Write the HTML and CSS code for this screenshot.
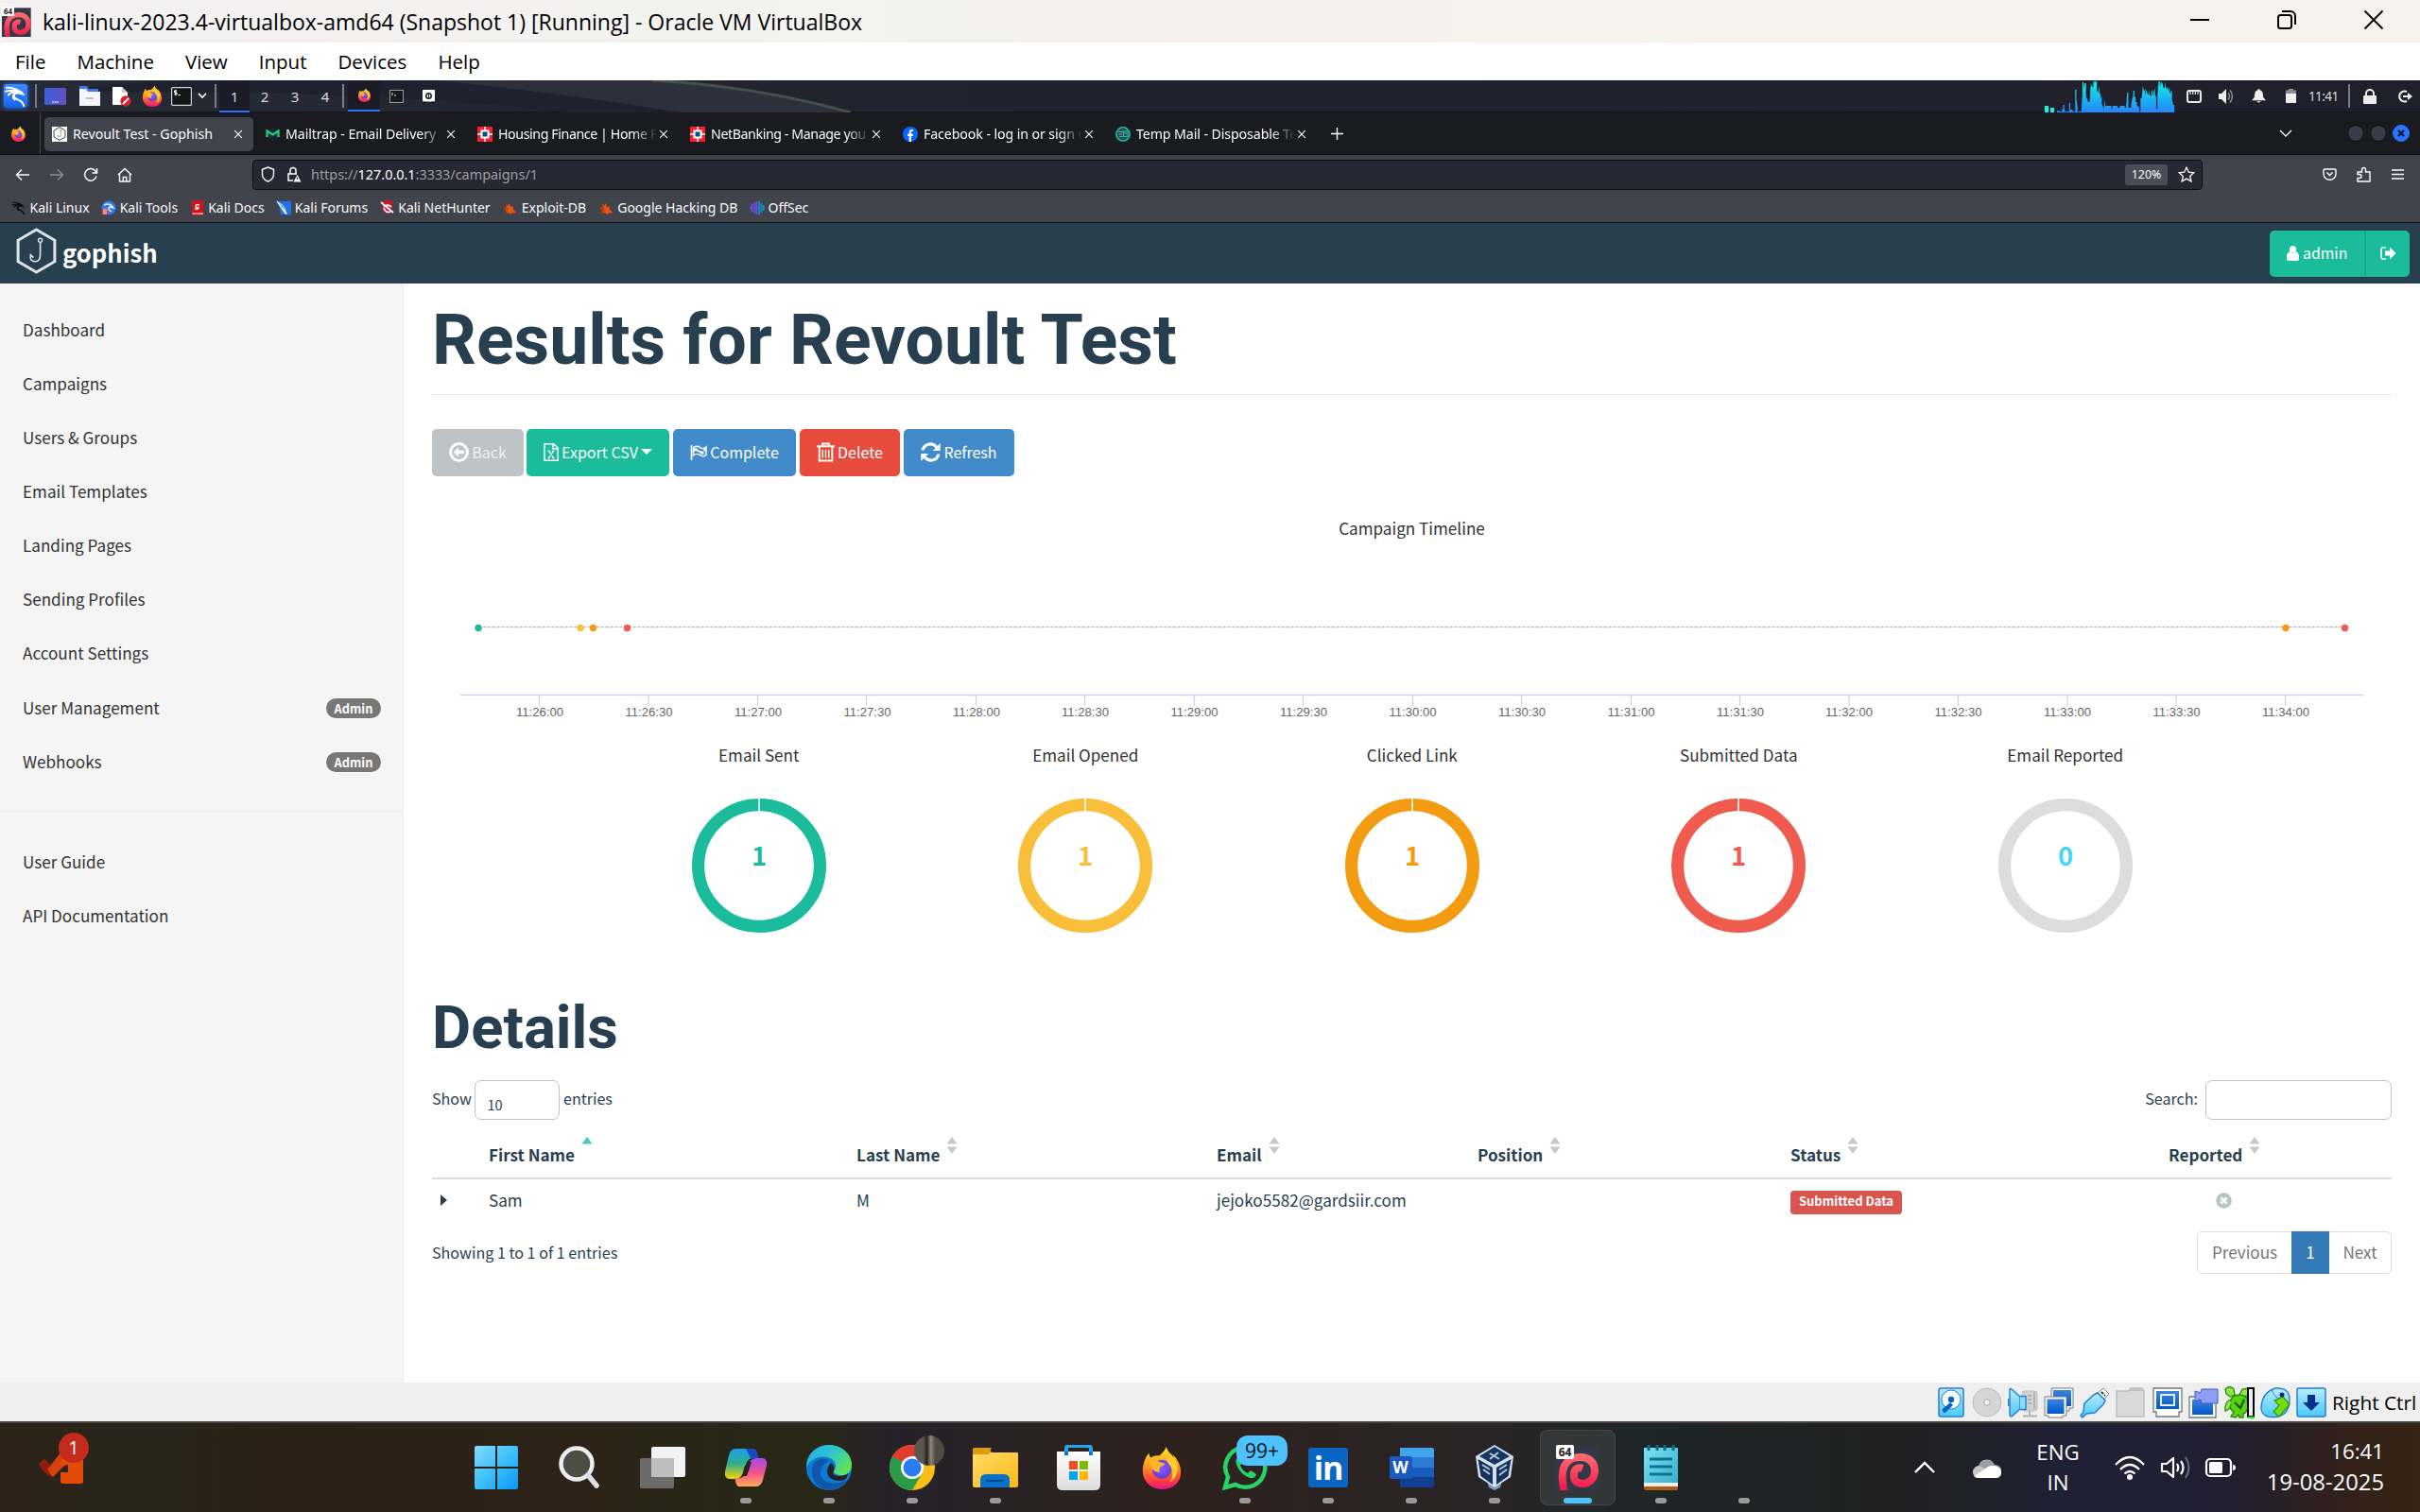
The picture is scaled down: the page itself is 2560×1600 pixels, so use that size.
FILE: index.html
```html
<!DOCTYPE html>
<html lang="en">
<head>
<meta charset="utf-8">
<title>Revoult Test - Gophish</title>
<link rel="stylesheet" href="styles.css">
</head>
<body>
<svg class="defs" width="0" height="0">
  <defs>
    <linearGradient id="fx" x1="0" y1="0" x2="0" y2="1"><stop offset="0" stop-color="#ffe226"/><stop offset=".45" stop-color="#ff9a1f"/><stop offset=".8" stop-color="#ff3b40"/><stop offset="1" stop-color="#e31587"/></linearGradient>
    <radialGradient id="fxg" cx=".5" cy=".4" r=".6"><stop offset="0" stop-color="#9059ff"/><stop offset="1" stop-color="#5b3fd6"/></radialGradient>
    <linearGradient id="cpu" x1="0" y1="0" x2="0" y2="1"><stop offset="0" stop-color="#0ff5e4"/><stop offset="1" stop-color="#2777ff"/></linearGradient>
    <linearGradient id="pk" x1="0" y1="0" x2="0" y2="1"><stop offset="0" stop-color="#ff6a6f"/><stop offset="1" stop-color="#f3154a"/></linearGradient>
    <linearGradient id="win" x1="0" y1="0" x2="1" y2="1"><stop offset="0" stop-color="#84dcff"/><stop offset=".5" stop-color="#3fc0fb"/><stop offset="1" stop-color="#0a95f5"/></linearGradient>
    <linearGradient id="cp1" x1="0" y1="0" x2="0" y2="1"><stop offset="0" stop-color="#1b9ef0"/><stop offset=".5" stop-color="#2fae8c"/><stop offset="1" stop-color="#f5d400"/></linearGradient>
    <linearGradient id="cp2" x1="0" y1="0" x2="0" y2="1"><stop offset="0" stop-color="#a04bf0"/><stop offset=".5" stop-color="#f0508c"/><stop offset="1" stop-color="#ffae55"/></linearGradient>
    <linearGradient id="ed1" x1="0" y1="0" x2="1" y2=".6"><stop offset="0" stop-color="#2aa8e8"/><stop offset=".5" stop-color="#2bc3d2"/><stop offset="1" stop-color="#5fe35a"/></linearGradient>
    <linearGradient id="fold" x1="0" y1="0" x2="1" y2="1"><stop offset="0" stop-color="#ffdc6b"/><stop offset="1" stop-color="#fdb813"/></linearGradient>
    <linearGradient id="store" x1="0" y1="0" x2="0" y2="1"><stop offset="0" stop-color="#fff"/><stop offset="1" stop-color="#dcdcdc"/></linearGradient>
    <linearGradient id="note" x1="0" y1="0" x2="1" y2="1"><stop offset="0" stop-color="#7fe3f2"/><stop offset="1" stop-color="#33abc9"/></linearGradient>
    <linearGradient id="aq" x1="0" y1="0" x2="0" y2="1"><stop offset="0" stop-color="#b8ecff"/><stop offset="1" stop-color="#4cc9f8"/></linearGradient>
    <linearGradient id="bl" x1="0" y1="0" x2="0" y2="1"><stop offset="0" stop-color="#3b84dd"/><stop offset="1" stop-color="#0059cc"/></linearGradient>
    <symbol id="firefox" viewBox="0 0 44 48"><path fill="url(#fx)" d="M4 14c1-3 3-5 4-6 0 2 1 4 2 5 3-2 6-3 9-2 4-3 7-7 8-10 1 4 3 6 6 9l2 3c0-2-.500-3-1-4 5 5 9 12 9 20 0 12-9 19-21 19S1 39 1 28c0-5 1-10 3-14z"/><circle cx="22" cy="26" r="10.500" fill="url(#fxg)"/><path fill="#ffb52a" d="M8 17c4-2 9-1 12 1 2 1 5 1 5 2 0 2-4 2-5 4s-1 3 0 5c-4 0-7-1-9-4z"/><path fill="#ffcf30" d="M31 9c6 5 9 12 8 19-1 6-4 10-8 12 3-5 4-10 2-15-2-4-5-6-5-9 0-3 1-5 3-7z"/></symbol>
    <symbol id="hdfc" viewBox="0 0 16 16"><path fill="#ed232a" d="M0 0h16v16H0z"/><path fill="#fff" d="M7.300 0h1.400v16H7.300zM0 7.300h16v1.400H0z"/><path fill="#fff" d="M3.500 3.500h9v9h-9z"/><path fill="#004c8f" d="M5.500 5.500h5v5h-5z"/></symbol>
    <symbol id="hook" viewBox="0 0 42 48"><path fill="none" stroke="currentColor" stroke-width="3" d="M21 2 40 13v22L21 46 2 35V13z"/><path fill="none" stroke="currentColor" stroke-width="1.600" d="M25 15v13c0 5-2 7-5 7-4 0-6-2-5-7l3 3"/><circle cx="25" cy="13" r="2" fill="none" stroke="currentColor" stroke-width="1.300"/></symbol>
    <symbol id="close" viewBox="0 0 10 10"><path d="M1.200 1.200l7.600 7.600M8.800 1.200 1.200 8.800" fill="none" stroke="#fbfbfe" stroke-width="1.100"/></symbol>
    <symbol id="dragon" viewBox="0 0 26 26"><path fill="none" stroke="currentColor" stroke-width="2.100" stroke-linecap="round" d="M3 4c6-1 9 1 13 3M2 8c4-1 8-2 12 0M5 12c3-3 6-4 9-4 3-1 5 0 7 3l-4-1c-5-1-7 2-5 5s9 2 10 9M15 9c-5 1-6 6-3 8"/></symbol>
    <symbol id="edb" viewBox="0 0 16 16"><path fill="#e8530f" d="M4 3l2 2 2-3 1 4 3 0 0 3 4 4-5 0-1 2-3-2-4 0 1-3-3-2 3-1z"/><path stroke="#7a2a0a" fill="none" d="M1 3l4 3M1 9l5-1M3 14l3-4"/></symbol>
    <symbol id="podman" viewBox="0 0 48 48"><path fill="#333747" d="M0 2h46v46H0z"/><path fill="none" stroke="url(#pk)" stroke-width="8" d="M9 48c0-6-2-11-1-18C9 18 17 13 27 13c9 0 15 6 15 14 0 9-6 14-13 14-6 0-10-4-9-10 0-5 4-8 9-6"/></symbol>
    <symbol id="sort" viewBox="0 0 12 18"><path fill="#c8c8c8" d="M6 0l5.500 7.500H.5zM.5 10.500h11L6 18z"/></symbol>
  </defs>
</svg>

<header class="titlebar">
  <div class="vm-icon"><svg width="32" height="32" viewBox="0 0 48 48"><use href="#podman"/></svg><span>64</span></div>
  <span class="vm-title">kali-linux-2023.4-virtualbox-amd64 (Snapshot 1) [Running] - Oracle VM VirtualBox</span>
  <div class="winctl">
    <svg width="22" height="22" viewBox="0 0 22 22"><path d="M1 11h20" stroke="#000" stroke-width="2"/></svg>
    <svg width="22" height="22" viewBox="0 0 22 22"><rect x="2" y="6" width="14" height="14" rx="2.500" fill="none" stroke="#000" stroke-width="2"/><path d="M6 2h9a5 5 0 0 1 5 5v9" fill="none" stroke="#000" stroke-width="2"/></svg>
    <svg width="22" height="22" viewBox="0 0 22 22"><path d="M1.500 1.500l19 19M20.500 1.500l-19 19" stroke="#000" stroke-width="1.800"/></svg>
  </div>
</header>
<nav class="menubar"><span>File</span><span>Machine</span><span>View</span><span>Input</span><span>Devices</span><span>Help</span></nav>

<div class="panel">
  <svg class="panel-art" width="1000" height="34" viewBox="0 0 1000 34"><path d="M100 6Q300-10 600 2 750 10 810 34L600 34Q400 10 80 12z" fill="#1f222e"/><path d="M460 0h220q120 4 215 34H720Q600 14 460 0z" fill="#2b303b"/><path d="M690 0Q800 6 900 34" fill="none" stroke="#44504f" stroke-width="3"/></svg>
  <div class="slot w37"><div class="kali-logo"><svg width="25" height="25"><use href="#dragon"/></svg></div></div><i class="vsep"></i>
  <div class="slot w35"><svg width="23" height="18" viewBox="0 0 23 18"><defs><linearGradient id="dk"><stop stop-color="#3563d8"/><stop offset="1" stop-color="#6a4cc4"/></linearGradient></defs><rect width="23" height="18" rx="1" fill="url(#dk)"/><path d="M8 15h7" stroke="#cfd6ff" stroke-width="1.500" stroke-dasharray="2 .7"/></svg></div>
  <div class="slot w34"><svg width="23" height="21" viewBox="0 0 23 21"><path d="M1 0h8l2 3h10v6H1z" fill="#3b78e8"/><path d="M1 3h7l2 3h13v15H1z" fill="#f4f6fb"/><path d="M8 13h8" stroke="#a8adb8" stroke-width="1.500"/></svg></div>
  <div class="slot w34"><svg width="21" height="22" viewBox="0 0 21 22"><path d="M1 1h10l6 6v13H1z" fill="#fff"/><path d="M11 1l6 6h-6z" fill="#c9cad0"/><circle cx="15" cy="16" r="5.700" fill="#d8202c"/><path d="M12 19l6-6" stroke="#fff" stroke-width="1.800"/></svg></div>
  <div class="slot w32"><svg width="22" height="23"><use href="#firefox"/></svg></div>
  <div class="slot w29"><svg width="22" height="20" viewBox="0 0 22 20"><rect x=".6" y=".6" width="20.800" height="18.800" rx="1" fill="#16171c" stroke="#cfcfd4" stroke-width="1.200"/><path d="M6 4H3.500v2H6v2H3.500M4.800 3v6M7.500 8.500H10" stroke="#fff" fill="none"/></svg></div>
  <div class="slot w17"><svg width="10" height="7" viewBox="0 0 10 7"><path d="M1 1l4 4 4-4" fill="none" stroke="#fff" stroke-width="1.700"/></svg></div>
  <i class="vsep gapl"></i>
  <div class="ws on">1</div><div class="ws">2</div><div class="ws">3</div><div class="ws">4</div>
  <i class="vsep"></i>
  <div class="slot w34 on"><svg width="15" height="15"><use href="#firefox"/></svg></div>
  <div class="slot w34"><svg width="15" height="14" viewBox="0 0 15 14"><rect x=".5" y=".5" width="14" height="13" fill="#18191e" stroke="#9b9ba3"/><path d="M3 3v3M5 6h2" stroke="#ddd"/></svg></div>
  <div class="slot w34"><svg width="13" height="14" viewBox="0 0 13 14"><rect width="13" height="12.500" rx="1" fill="#fff"/><circle cx="6.500" cy="6.500" r="2.700" fill="none" stroke="#222" stroke-width="1.600"/><path d="M6.500 3v7" stroke="#222"/><path d="M1 13.500h2.500M9.500 13.500H12" stroke="#000" stroke-width="1.500"/></svg></div>
  <div class="tray">
    <svg width="142" height="34" viewBox="0 0 142 34"><path fill="#0ff5e4" d="M0 27h4v7H0zM6 29h4v5H6z"/><path fill="url(#cpu)" transform="translate(13) scale(1.28 1) translate(-14)" d="M14 34v-2h2v1h2v-2l1-1v-4h1v4l1 3h3V24h1v7h2v2h2V10h1v10l1 8v5h3l1-19V2h1v6l1-5h1v14l2 6h1l1-20 1 4h1V1h1v3l1-4 1 2v10h1l1-6v8h1v6l1-4v9l2 5v-10l1 7h5v3h1v-3h4v2h2v-2h4v2h1l1-16h1v16h2l1-9 1-3v-6h1v6l1 1v5h1v3l1 2h1v5h1V19h1l1-13 1 6 1-4v8l1-6 1 5h1v-5l1 6 1 1v-5l1-2v6l2-8v8l1 1v13h1V15l1-14h1v7l1-7 1 3V2l1 6h1V1l1 8 1-1v-2l1 5 1-4v6h1l1-3v10l1 6h1v12h3v-1l2-2v1l2 1v-6h1v7z"/></svg>
    <div class="slot t1"><svg width="16" height="14" viewBox="0 0 16 14"><rect x="1" y="1" width="14" height="12" rx="2" fill="none" stroke="#e8e8ea" stroke-width="2"/><path d="M4 1v4M6.700 1v4M9.300 1v4M12 1v4" stroke="#e8e8ea" stroke-width="1.200"/></svg></div>
    <div class="slot t2"><svg width="18" height="16" viewBox="0 0 18 16"><path d="M1 5h3l5-5v16l-5-5H1z" fill="#eee"/><path d="M11 4.500q3 3.500 0 7M13 1.500q5 6.500 0 13" stroke="#8c8d93" stroke-width="1.500" fill="none"/></svg></div>
    <div class="slot t2"><svg width="15" height="15" viewBox="0 0 15 15"><path d="M7.500 0c1 0 1 1 1 1.300C12 2 12 6 12.200 9L15 12.200H0L2.800 9C3 6 3 2 6.500 1.300c0-.3 0-1.300 1-1.300zM5.500 13h4q-2 3-4 0z" fill="#eee"/></svg></div>
    <div class="slot t2"><svg width="11" height="15" viewBox="0 0 11 15"><path d="M0 1.500h3V0h5v1.500h3V5H0z" fill="#8c8d93"/><path d="M0 5h11v10H0z" fill="#eee"/></svg></div>
    <span class="vclock">11:41</span><i class="vsep"></i>
    <div class="slot t3"><svg width="14" height="16" viewBox="0 0 14 16"><path d="M3 8V5a4 4 0 0 1 8 0v3" fill="none" stroke="#eee" stroke-width="2"/><rect y="7" width="14" height="9" rx="1" fill="#eee"/></svg></div>
    <div class="slot t4"><svg width="16" height="14" viewBox="0 0 16 14"><path d="M10 2a5.500 5.500 0 1 0 0 10" fill="none" stroke="#eee" stroke-width="2"/><path d="M6 6h5V3l5 4-5 4V8H6z" fill="#eee"/></svg></div>
  </div>
</div>

<div class="tabbar">
  <div class="slot fxslot"><svg width="17" height="17"><use href="#firefox"/></svg></div>
  <div class="tab active"><div class="fav hk"><svg width="14" height="15"><use href="#hook"/></svg></div><span>Revoult Test - Gophish</span><svg width="10" height="10"><use href="#close"/></svg></div>
  <div class="tab"><div class="fav"><svg width="15" height="16" viewBox="0 0 15 16"><path d="M2 4l5.500-3.300L13 4v8l-5.500 3.300L2 12z" fill="#14283a"/><path d="M1.500 11V4.500l6 4 6-4V11" fill="none" stroke="#1fd47d" stroke-width="2.200"/></svg></div><span>Mailtrap - Email Delivery</span><svg width="10" height="10"><use href="#close"/></svg></div>
  <div class="tab"><div class="fav"><svg width="16" height="16"><use href="#hdfc"/></svg></div><span class="tight">Housing Finance | Home F</span><svg width="10" height="10"><use href="#close"/></svg></div>
  <div class="tab"><div class="fav"><svg width="16" height="16"><use href="#hdfc"/></svg></div><span class="tight">NetBanking - Manage you</span><svg width="10" height="10"><use href="#close"/></svg></div>
  <div class="tab"><div class="fav"><svg width="16" height="16" viewBox="0 0 16 16"><circle cx="8" cy="8" r="8" fill="#0866ff"/><path d="M6.700 16V10H5V7.700h1.700V6.300c0-2.300 1.100-3.300 3.100-3.300l1.200.1v2H10c-.9 0-1.200.5-1.200 1.200v1.400H11L10.600 10H8.900v6z" fill="#fff"/></svg></div><span>Facebook - log in or sign u</span><svg width="10" height="10"><use href="#close"/></svg></div>
  <div class="tab"><div class="fav"><svg width="16" height="16" viewBox="0 0 16 16"><circle cx="8" cy="8" r="7.200" fill="#3a4658" stroke="#15c39a" stroke-width="1.500"/><path d="M3 5.500h5M3.500 8H7M4 10.500h4M8.500 5h4.500v5.500H8.500zM8.500 5.500l2.200 2.500L13 5.500" stroke="#15c39a" fill="none"/></svg></div><span>Temp Mail - Disposable Te</span><svg width="10" height="10"><use href="#close"/></svg></div>
  <div class="newtab"><svg width="13" height="13" viewBox="0 0 13 13"><path d="M6.500 0v13M0 6.500h13" stroke="#fbfbfe" stroke-width="1.400"/></svg></div>
  <div class="tabctl"><svg width="14" height="9" viewBox="0 0 14 9"><path d="M1 1l6 6 6-6" fill="none" stroke="#fbfbfe" stroke-width="1.400"/></svg>
    <i class="wb"></i><i class="wb"></i><i class="wb blue"><svg width="8" height="8" viewBox="0 0 8 8"><path d="M1 1l6 6M7 1 1 7" stroke="#0d1730" stroke-width="2.200"/></svg></i></div>
</div>

<div class="navbar">
  <div class="slot n"><svg width="16" height="14" viewBox="0 0 16 14"><path d="M15 7H1.500M7 1.500 1.500 7 7 12.500" fill="none" stroke="#fbfbfe" stroke-width="1.400"/></svg></div>
  <div class="slot n dim"><svg width="16" height="14" viewBox="0 0 16 14"><path d="M1 7h13.500M9 1.500 14.500 7 9 12.500" fill="none" stroke="#fbfbfe" stroke-width="1.400"/></svg></div>
  <div class="slot n"><svg width="16" height="16" viewBox="0 0 16 16"><path d="M14 9.500A6.300 6.300 0 1 1 12.500 3.500L14.500 5.500M14.500 1v5h-5" fill="none" stroke="#fbfbfe" stroke-width="1.500"/></svg></div>
  <div class="slot n"><svg width="16" height="16" viewBox="0 0 16 16"><path d="M1 8l7-6.500L15 8M2.500 7v8h11V7M6.300 15v-4.500h3.400V15" fill="none" stroke="#fbfbfe" stroke-width="1.400"/></svg></div>
  <div class="urlbar">
    <svg width="15" height="17" viewBox="0 0 15 17"><path d="M7.500 1l6 2.300v5c0 4-3 6.700-6 7.700-3-1-6-3.700-6-7.700v-5z" fill="none" stroke="#fbfbfe" stroke-width="1.400"/></svg>
    <svg class="lk" width="16" height="17" viewBox="0 0 16 17"><path d="M4 8V4.500a3 3 0 0 1 6 0V8M7 15H2V8h9" fill="none" stroke="#fbfbfe" stroke-width="1.500"/><path d="M11.500 9l4 7.500h-8z" fill="#fbfbfe"/><path d="M11.500 11.500v2.500" stroke="#272833"/></svg>
    <span class="url">https://<b>127.0.0.1</b>:3333/campaigns/1</span>
    <span class="zoomlvl">120%</span>
    <svg class="star" width="18" height="17" viewBox="0 0 18 17"><path d="M9 1.200l2.300 5 5.500.6-4.100 3.700 1.200 5.400L9 13.100l-4.900 2.800 1.200-5.400L1.200 6.800l5.500-.6z" fill="none" stroke="#fbfbfe" stroke-width="1.300"/></svg>
  </div>
  <div class="navright">
    <div class="slot nr"><svg width="15" height="13" viewBox="0 0 15 13"><path d="M2 1h11a1 1 0 0 1 1 1v4a6.500 6.200 0 0 1-13 0V2a1 1 0 0 1 1-1z" fill="none" stroke="#fbfbfe" stroke-width="1.400"/><path d="M4.500 4.500l3 3 3-3" fill="none" stroke="#fbfbfe" stroke-width="1.500"/></svg></div>
    <div class="slot nr"><svg width="15" height="17" viewBox="0 0 15 17"><path d="M1 6h4.500V3.500a2 2 0 0 1 4 0V6H14v10H1v-3.500h2a2 2 0 0 0 0-4H1z" fill="none" stroke="#fbfbfe" stroke-width="1.400"/></svg></div>
    <div class="slot nr"><svg width="13" height="11" viewBox="0 0 13 11"><path d="M0 1h13M0 5.500h13M0 10h13" stroke="#fbfbfe" stroke-width="1.300"/></svg></div>
  </div>
</div>

<div class="bookmarks">
  <span><svg class="dk" width="16" height="16"><use href="#dragon"/></svg>Kali Linux</span>
  <span><svg width="16" height="16" viewBox="0 0 16 16"><circle cx="8" cy="8" r="7.500" fill="#2b7bf3"/><path d="M3 5q6-3 10 3l-4-1q-3 2 2 5" stroke="#fff" fill="none" stroke-width="1.300"/><path d="M1 9h6v6H1z" fill="#e03a3a"/><path d="M3 9v6M5 9v6" stroke="#fff" stroke-width=".8"/></svg>Kali Tools</span>
  <span><svg width="16" height="16" viewBox="0 0 16 16"><rect x="2" width="12" height="16" rx="1" fill="#d3121b"/><path d="M2.500 14h11.500" stroke="#fff"/><path d="M10 5Q6 4 6 6t3 1.500Q9 10 5 9" stroke="#fff" fill="none" stroke-width="1.300"/></svg>Kali Docs</span>
  <span><svg width="16" height="16" viewBox="0 0 16 16"><path d="M2 1h14v14H5z" fill="#1e72ee"/><path d="M1 1l10 13-1 0z" stroke="#fff" stroke-width="1.200" fill="#fff"/><path d="M3 3q6 2 7 9" stroke="#fff" fill="none"/></svg>Kali Forums</span>
  <span><svg width="16" height="16" viewBox="0 0 16 16"><path d="M3 0h10v9l-4 6L2 10z" fill="#c5172b"/><path d="M1 2l13 11M4 7q4-4 8 0M4 8q2 6 7 4" stroke="#fff" stroke-width="1.700" fill="none"/></svg>Kali NetHunter</span>
  <span class="wide"><svg width="16" height="15"><use href="#edb"/></svg>Exploit-DB</span>
  <span class="wide"><svg width="16" height="15"><use href="#edb"/></svg>Google Hacking DB</span>
  <span><svg width="16" height="16" viewBox="0 0 16 16"><path d="M5 2v12M2.500 4v8M.8 6.500v3M7.300 1v14" stroke="#6a4ce0" stroke-width="1.800"/><path d="M10 1v14M12.500 3v10M14.800 5v6" stroke="#138fc0" stroke-width="1.900"/></svg>OffSec</span>
</div>

<div class="gp-header">
  <svg class="brand-hook" width="43" height="49"><use href="#hook"/></svg><span class="brand">gophish</span>
  <div class="usergroup"><span class="user"><svg width="13" height="16" viewBox="0 0 13 16"><circle cx="6.500" cy="3.900" r="3.700" fill="#fff"/><path d="M0 12c0-4 2-5.500 3.200-5.500 2 1.600 4.600 1.600 6.600 0C11 6.500 13 8 13 12v2q0 2-2 2H2q-2 0-2-2z" fill="#fff"/></svg>admin</span><span class="logout"><svg width="17" height="14" viewBox="0 0 17 14"><path d="M6 1H3a2 2 0 0 0-2 2v8a2 2 0 0 0 2 2h3" fill="none" stroke="#fff" stroke-width="1.600"/><path d="M5 4.500h5V.5L16.500 7 10 13.500v-4H5z" fill="#fff"/></svg></span></div>
</div>

<div class="gp-body">
  <aside class="sidebar">
    <a>Dashboard</a><a>Campaigns</a><a>Users &amp; Groups</a><a>Email Templates</a><a>Landing Pages</a><a>Sending Profiles</a><a>Account Settings</a>
    <a>User Management<em>Admin</em></a><a>Webhooks<em>Admin</em></a>
    <hr>
    <a>User Guide</a><a>API Documentation</a>
  </aside>
  <main>
    <h1>Results for Revoult Test</h1>
    <div class="buttons">
      <button class="b back"><svg width="21" height="21" viewBox="0 0 21 21"><circle cx="10.500" cy="10.500" r="8.900" fill="none" stroke="#fff" stroke-width="3"/><path d="M4.500 10.500l5.500-5.300v3.600h6v3.400h-6v3.600z" fill="#fff"/></svg>Back</button>
      <button class="b export"><svg width="16" height="19" viewBox="0 0 16 19"><path d="M1 .8h9.500L15.200 5v13.200H1zM10 1v5h5" fill="none" stroke="#fff" stroke-width="1.500"/><path d="M5.500 8.500l5 7M10.500 8.500l-5 7M4.500 8.300h3M9 8.300h2.500M4.500 15.700H7M9 15.700h2.500" stroke="#fff" stroke-width="1.200"/></svg>Export CSV<i class="caret"></i></button>
      <button class="b complete"><svg width="18" height="16" viewBox="0 0 18 16"><path d="M1.500 0v16" stroke="#fff" stroke-width="1.600"/><path d="M3.500 2.500q3.500-2.500 7 0t6.500-.5v8.500q-3 2.500-6.500 0t-7 .5z" fill="none" stroke="#fff" stroke-width="1.400"/><path d="M4 4q2-1.500 3.500-.5v3Q5.500 5.500 4 7zM11 6q1.500 1 3.500.5v3q-2 .5-3.500-.5zM7.500 6.500Q9 7 11 8.500v-2q-2-1-3.500-2zM14.500 3.500L17 3v3l-2.500.5z" fill="#fff"/></svg>Complete</button>
      <button class="b delete"><svg width="19" height="21" viewBox="0 0 19 21"><path d="M0 4.300h19M6 4V1.500h7V4M2.700 4.500v15h13.600v-15" fill="none" stroke="#fff" stroke-width="1.900"/><path d="M6.300 8v8.500M9.500 8v8.500M12.700 8v8.500" stroke="#fff" stroke-width="1.400"/></svg>Delete</button>
      <button class="b refresh"><svg width="21" height="21" viewBox="0 0 21 21"><path d="M2 8.500A8.300 8.300 0 0 1 16.500 5M19 12.500A8.300 8.300 0 0 1 4.500 16" fill="none" stroke="#fff" stroke-width="3.200"/><path d="M20.700 1v8h-8zM.3 20v-8h8z" fill="#fff"/></svg>Refresh</button>
    </div>

    <svg class="timeline" width="2073" height="276" viewBox="457 504 2073 276">
      <text class="ctitle" x="1493.500" y="566">Campaign Timeline</text>
      <path d="M506 663.500H2480" stroke="#bfbfbf" stroke-width="1.400" stroke-dasharray="3.600 1.200"/>
      <circle cx="506" cy="664.500" r="3.700" fill="#1abc9c"/><circle cx="614" cy="664.500" r="3.700" fill="#f9bf3b"/><circle cx="627.500" cy="664.500" r="3.700" fill="#f39c12"/><circle cx="663.500" cy="664.500" r="3.700" fill="#f05b4f"/><circle cx="2418" cy="664.500" r="3.700" fill="#f39c12"/><circle cx="2480.500" cy="664.500" r="3.700" fill="#f05b4f"/>
      <path d="M487 735.500H2500.500" stroke="#ccd6eb" stroke-width="1.400"/>
      <path stroke="#ccd6eb" stroke-width="1.200" d="M570.500 736v11M686 736v11M801.500 736v11M916.500 736v11M1032.500 736v11M1147.500 736v11M1263.500 736v11M1378.500 736v11M1494.500 736v11M1609.500 736v11M1725.500 736v11M1840.500 736v11M1956 736v11M2071.500 736v11M2187 736v11M2302 736v11M2417.500 736v11"/>
      <g class="ticks"><text x="571" y="758">11:26:00</text><text x="686.500" y="758">11:26:30</text><text x="802" y="758">11:27:00</text><text x="917.500" y="758">11:27:30</text><text x="1033" y="758">11:28:00</text><text x="1148" y="758">11:28:30</text><text x="1263.500" y="758">11:29:00</text><text x="1379" y="758">11:29:30</text><text x="1494.500" y="758">11:30:00</text><text x="1610" y="758">11:30:30</text><text x="1725.500" y="758">11:31:00</text><text x="1841" y="758">11:31:30</text><text x="1956" y="758">11:32:00</text><text x="2071.500" y="758">11:32:30</text><text x="2187" y="758">11:33:00</text><text x="2302.500" y="758">11:33:30</text><text x="2418" y="758">11:34:00</text></g>
    </svg>

    <div class="donuts">
      <figure class="teal"><figcaption>Email Sent</figcaption><svg width="142" height="142" viewBox="0 0 142 142"><circle cx="71" cy="71" r="64.400"/><path d="M71 0v14"/><text x="71" y="71">1</text></svg></figure>
      <figure class="yellow"><figcaption>Email Opened</figcaption><svg width="142" height="142" viewBox="0 0 142 142"><circle cx="71" cy="71" r="64.400"/><path d="M71 0v14"/><text x="71" y="71">1</text></svg></figure>
      <figure class="orange"><figcaption>Clicked Link</figcaption><svg width="142" height="142" viewBox="0 0 142 142"><circle cx="71" cy="71" r="64.400"/><path d="M71 0v14"/><text x="71" y="71">1</text></svg></figure>
      <figure class="red"><figcaption>Submitted Data</figcaption><svg width="142" height="142" viewBox="0 0 142 142"><circle cx="71" cy="71" r="64.400"/><path d="M71 0v14"/><text x="71" y="71">1</text></svg></figure>
      <figure class="gray"><figcaption>Email Reported</figcaption><svg width="142" height="142" viewBox="0 0 142 142"><circle cx="71" cy="71" r="64.400"/><text x="71" y="71">0</text></svg></figure>
    </div>

    <h2>Details</h2>
    <div class="tools"><label>Show <span class="select">10</span> entries</label><label class="search">Search: <span class="input"></span></label></div>
    <table>
      <colgroup><col class="c0"><col class="c1"><col class="c2"><col class="c3"><col class="c4"><col class="c5"><col></colgroup>
      <thead><tr><th></th>
        <th><div>First Name<svg class="s" width="12" height="18" viewBox="0 0 12 18"><path fill="#48c9b0" d="M6 0l5.500 7.500H.5z"/></svg></div></th>
        <th><div>Last Name<svg class="s" width="12" height="18"><use href="#sort"/></svg></div></th>
        <th><div>Email<svg class="s" width="12" height="18"><use href="#sort"/></svg></div></th>
        <th><div>Position<svg class="s" width="12" height="18"><use href="#sort"/></svg></div></th>
        <th><div>Status<svg class="s" width="12" height="18"><use href="#sort"/></svg></div></th>
        <th><div>Reported<svg class="s" width="12" height="18"><use href="#sort"/></svg></div></th></tr></thead>
      <tbody><tr><td><i class="expand"></i></td><td>Sam</td><td>M</td><td>jejoko5582@gardsiir.com</td><td></td><td><span class="label">Submitted Data</span></td>
        <td class="rep"><svg width="17" height="17" viewBox="0 0 17 17"><circle cx="8.500" cy="8.500" r="8.300" fill="#bdc3c7"/><path d="M5.500 5.500l6 6M11.500 5.500l-6 6" stroke="#fff" stroke-width="2.800"/></svg></td></tr></tbody>
    </table>
    <div class="footer"><span>Showing 1 to 1 of 1 entries</span><div class="pages"><span class="p1">Previous</span><span class="cur">1</span><span class="p3">Next</span></div></div>
  </main>
</div>

<div class="vbstatus">
  <svg width="32" height="34" viewBox="0 0 32 34"><rect x="3" y="2" width="26" height="30" rx="2" fill="url(#aq)" stroke="#2380d0" stroke-width="1.500"/><circle cx="16" cy="14" r="10" fill="#fff" stroke="#2380d0"/><circle cx="16" cy="14" r="3.200" fill="#0a64c8"/><path d="M15 17l3 3-8 8q-4 0-3-4z" fill="#0a64c8"/></svg>
  <svg width="32" height="34" viewBox="0 0 32 34"><circle cx="16" cy="17" r="15" fill="#d6d6d6" stroke="#bdbdbd"/><circle cx="16" cy="17" r="3.300" fill="#eee" stroke="#aaa"/></svg>
  <svg width="32" height="34" viewBox="0 0 32 34"><rect x="15" y="5" width="16" height="21" rx="3" fill="#d2d2d2" stroke="#bbb"/><path d="M21 10h4M21 14h4M21 18h4M23 26v5M16 31.500h15M28 6v18" stroke="#b2b2b2" stroke-width="2"/><path d="M2 3q1-1 2 0l9 8v13l-9 8q-2 0-2-2z" fill="url(#aq)" stroke="#2380d0" stroke-width="1.400"/><path d="M13 10.500h6v14h-6M.7 13v8" fill="#8fdcfb" stroke="#2380d0" stroke-width="1.400"/></svg>
  <svg width="32" height="34" viewBox="0 0 32 34"><path d="M8 2h23v21h-4v3H8z" fill="#fff" stroke="#777"/><path d="M10 4h19v17H10z" fill="url(#bl)"/><path d="M1 11h23v20h-4v2H5v-2H1z" fill="#fff" stroke="#777"/><path d="M3.500 13.500h18V29h-18z" fill="url(#bl)"/></svg>
  <svg width="32" height="34" viewBox="0 0 32 34"><path d="M18 8l7-6 6 6-6 7z" fill="#f3f3f3" stroke="#888"/><path d="M23 6l2 2M26 9l1 1" stroke="#333" stroke-width="2"/><path d="M15 9l4-2 8 8-2 4-9 9-9 1-4 4-2-2 3-4 1-9z" fill="url(#aq)" stroke="#2380d0" stroke-width="1.500"/></svg>
  <svg width="32" height="34" viewBox="0 0 32 34"><path d="M1 5h12l3-3h12l2 3v27H1z" fill="#d8d8d8" stroke="#bbb" stroke-width="1.300"/><path d="M14 5l3-3h10l2 3z" fill="#c2c2c2"/></svg>
  <svg width="32" height="34" viewBox="0 0 32 34"><path d="M1 2h30v25h-3v5H4v-5H1z" fill="#fff" stroke="#777" stroke-width="1.300"/><path d="M4 5h24v19H4z" fill="url(#bl)"/><rect x="9" y="9" width="14" height="11" fill="none" stroke="#fff" stroke-width="1.800"/></svg>
  <svg width="32" height="34" viewBox="0 0 32 34"><path d="M1 11h28v22H1z" fill="#fff" stroke="#777" stroke-width="1.300"/><path d="M4 14h22v16H4z" fill="url(#bl)"/><path d="M14 3h17v15H14l-1-4-6 2V5l6 2z" fill="#8c9df5" stroke="#4a5cc0"/></svg>
  <svg width="32" height="34" viewBox="0 0 32 34"><path d="M16 9q9 0 9 10 0 9-5 10v4h-4l-1-3-3 3-5-1 3-5q-5-3-4-9 1-9 10-9z" fill="#5bd313" stroke="#2b8a08" stroke-width="1.400"/><path d="M1 3q5-5 9 0l1 6-5 2-4-3zM6 14q-6 3-5 12 5-1 6-7M16 9l3-6 8-1-2 9z" fill="#8fe846" stroke="#2b8a08" stroke-width="1.300"/><path d="M11 17l6 6 4-9" fill="none" stroke="#14600c" stroke-width="2.400"/><rect x="25" y="2" width="6" height="30" fill="#eee" stroke="#000" stroke-width="2"/><path d="M25 33h7" stroke="#0f0" stroke-width="2"/></svg>
  <svg width="32" height="34" viewBox="0 0 32 34"><path d="M1 23Q2 6 16 2q15-1 15 12 0 15-12 18Q2 35 1 23z" fill="url(#aq)" stroke="#2380d0" stroke-width="1.400"/><path d="M12 3q2 9 12 12" fill="none" stroke="#2380d0"/><path d="M24 11l7 8-11 13-6-5 6-7-5-5z" fill="#74dd10" stroke="#3c9a0a" stroke-width="1.400"/><circle cx="23" cy="9" r="2.500" fill="#0c2d6b"/></svg>
  <svg width="32" height="34" viewBox="0 0 32 34"><rect x="1" y="2" width="30" height="30" rx="2" fill="url(#aq)" stroke="#2380d0" stroke-width="1.500"/><path d="M12 9h8v8h5l-9 9-9-9h5z" fill="#06318a"/></svg>
  <span>Right Ctrl</span>
</div>

<footer class="taskbar">
  <div class="widget"><svg width="48" height="46" viewBox="0 0 48 46"><path d="M0 25l6-6 10 13-2 7q-9-3-14-14z" fill="#8e1c10"/><path d="M13 39L7 31 22 12l10 8z" fill="#d8400a" transform="translate(2 0)"/><path d="M26 12h21v32q0 2-3 2H26q-3 0-3-3v-9l8 0V26l-8 2z" fill="#e24a06"/></svg><b>1</b></div>
  <div class="apps">
    <div><svg width="46" height="46" viewBox="0 0 46 46"><path fill="url(#win)" d="M0 2q0-2 2-2h20v22H0zM24 0h20q2 0 2 2v20H24zM0 24h22v22H2q-2 0-2-2zM24 24h22v20q0 2-2 2H24z"/></svg></div>
    <div><svg width="46" height="46" viewBox="0 0 46 46"><circle cx="20" cy="19" r="16.500" fill="#4d4d44" stroke="#eceef0" stroke-width="4.500"/><path d="M32 31l9 11" stroke="#dcdfe4" stroke-width="5.500" stroke-linecap="round"/></svg></div>
    <div><svg width="48" height="46" viewBox="0 0 48 46"><rect x="12" y="1" width="36" height="32" rx="2" fill="#f2f2f2"/><rect x="0" y="13" width="36" height="32" rx="2" fill="#7d7d7d" fill-opacity=".8"/><path d="M12 13h24v20H12z" fill="#bdbdbd"/></svg></div>
    <div class="run"><svg width="46" height="44" viewBox="0 0 46 44"><path d="M12 2h18q4 0 5 6l1 4h-6q-5 0-7 7l-3 8q-2 7-8 7H6q-6 0-5-8L5 9q2-7 7-7z" fill="url(#cp1)"/><path d="M23 2h7q4 0 5 6l1 4h-8z" fill="#1549c8"/><path d="M34 42H16q-3 0-4-6l-1-3h6q4 0 6-7l3-7q2-7 8-7h6q6 0 5 8l-4 15q-2 7-7 7z" fill="url(#cp2)"/><path d="M21 22l4-6h4l-5 15h-4z" fill="#262127"/></svg></div>
    <div class="run"><svg width="48" height="48" viewBox="0 0 48 48"><circle cx="24" cy="24" r="24" fill="#0b7ad6"/><path d="M0 24C0 9 11 0 24 0c14 0 24 10 24 21 0 8-5 12-13 11-5-1-7-3-5-6 2-4 1-8-3-11C17 9 4 14 0 24z" fill="url(#ed1)"/><path d="M15 30c0-5 3-11 9-13-8-6-18 0-18 10 0 12 9 21 18 21 9 0 15-4 19-11-10 6-27 5-28-7z" fill="#1157a8"/><path d="M22 28c0-4 2-7 4-9 4 3 4 6 3 8-2 3 0 6 6 6 3 0 7-1 9-3 0 3-2 8-8 8-7 0-14-3-14-10z" fill="#262127"/></svg></div>
    <div class="run chrome"><svg width="48" height="48" viewBox="0 0 48 48"><circle cx="24" cy="24" r="24" fill="#f9bf15"/><path d="M3.200 12A24 24 0 0 1 44.800 12H24L14 29z" fill="#e33b2e"/><path d="M3.200 12A24 24 0 0 0 24 48L34.400 30 24 24z" fill="#2b9c45"/><path d="M3.200 12L13.600 30 24 24V12z" fill="#2b9c45"/><path d="M3.200 12H24v12z" fill="#e33b2e"/><circle cx="24" cy="24" r="12" fill="#fff"/><circle cx="24" cy="24" r="9.500" fill="#2b7cf0"/></svg><i class="avatar"></i></div>
    <div class="run"><svg width="48" height="42" viewBox="0 0 48 42"><path d="M0 3q0-3 3-3h13l4 5h28v12H0z" fill="#dc9a0c"/><rect y="5" width="48" height="37" rx="2" fill="url(#fold)"/><path d="M20 0l-3 7H0V2q0-2 3-2z" fill="#dc9a0c"/><path d="M8 42V34q0-6 6-6h19q6 0 6 6v8z" fill="#0a72c9"/><path d="M14 35h19" stroke="#064b8c" stroke-width="2.200"/></svg></div>
    <div><svg width="46" height="48" viewBox="0 0 46 48"><path d="M10 10V4q0-3 3-3h20q3 0 3 3v6" fill="none" stroke="#1fa6ee" stroke-width="4"/><path d="M0 7h46v35q0 6-6 6H6q-6 0-6-6z" fill="url(#store)"/><path d="M10 7v4M36 7v4" stroke="#0d7cc4" stroke-width="4"/><path d="M13 17h9v9h-9z" fill="#f25022"/><path d="M24 17h9v9h-9z" fill="#7fba00"/><path d="M13 28h9v9h-9z" fill="#00a4ef"/><path d="M24 28h9v9h-9z" fill="#ffb900"/></svg></div>
    <div><svg width="44" height="46"><use href="#firefox"/></svg></div>
    <div class="run wa"><svg width="48" height="48" viewBox="0 0 48 48"><path d="M3 45l3-11A21 21 0 1 1 14 42z" fill="#2c2322" stroke="#25d366" stroke-width="4.500"/><path d="M17 13q-4 2-2 8 4 10 14 14 6 1 7-4l-6-4-3 3q-5-2-8-8l2-3-2-6z" fill="#25d366"/></svg><b>99+</b></div>
    <div class="run"><div class="linkedin">in</div></div>
    <div class="run"><div class="word"><span>W</span></div></div>
    <div class="run"><svg width="40" height="48" viewBox="0 0 40 48"><path d="M12 38h16l-2 7-6 3-6-3z" fill="#7e9bc4"/><path d="M20 0l20 12-3 22-17 11L3 34 0 12z" fill="#d4e0f0"/><path d="M20 2l16 10-16 9L4 12z" fill="#17375e"/><path d="M2.500 15L18 24v18L5.500 33zM37.500 15L22 24v18l12.500-9z" fill="#16315a"/><path d="M15 9l10 6M24 8l-9 7M7 21l8 5M25 26l8-5M8 26l7 5M25 32l8-6" stroke="#b4c6e0" stroke-width="2"/></svg></div>
    <div class="run cur"><div class="vm64"><svg width="48" height="48"><use href="#podman"/></svg><span>64</span></div></div>
    <div class="run"><svg width="36" height="48" viewBox="0 0 36 48"><path d="M0 4q0-1 1-1h34q1 0 1 1v40H0z" fill="url(#note)"/><path d="M5 0v6M14 0v6M22 0v6M31 0v6" stroke="#056e8c" stroke-width="3"/><path d="M6 15h24M6 23h24M6 31h24" stroke="#0a7490" stroke-width="2.800"/><path d="M0 40h36v4H0z" fill="#eee"/><path d="M0 44h36v2q0 2-2 2H2q-2 0-2-2z" fill="#b35a12"/></svg></div>
    <div class="run"></div>
  </div>
  <div class="systray">
    <svg width="24" height="14" viewBox="0 0 24 14"><path d="M2 12L12 2l10 10" fill="none" stroke="#fff" stroke-width="2.400"/></svg>
    <svg class="cloud" width="32" height="24" viewBox="0 0 32 24"><path d="M7 23a7 7 0 0 1 1-13A9 9 0 0 1 25 9a6.500 6.500 0 0 1 1 14z" fill="#9c9da3"/><path d="M7 23a6.500 6.500 0 1 1 6-11l12 11z" fill="#c6c6ca"/><path d="M3 21L14 14q6-6 14-3 4 2 4 6 0 6-6 6H7q-2 0-4-2z" fill="#fff"/></svg>
    <span class="lang">ENG<br>IN</span>
    <svg class="wifi" width="34" height="28" viewBox="0 0 34 28"><path d="M2 11Q17-5 32 11M7 16q10-10 20 0M11.500 20.500q5.500-5 11 0" fill="none" stroke="#fff" stroke-width="2.300"/><circle cx="17" cy="24" r="3" fill="#fff"/></svg>
    <svg class="spk" width="34" height="28" viewBox="0 0 34 28"><path d="M2 10h5l7-6v20l-7-6H2z" fill="none" stroke="#fff" stroke-width="2.200" stroke-linejoin="round"/><path d="M18 10q2.500 4 0 8M22 7q5 7 0 14" fill="none" stroke="#fff" stroke-width="2.200"/><path d="M27 3q7 11 0 22" fill="none" stroke="#66667a" stroke-width="2.200"/></svg>
    <svg class="bat" width="34" height="22" viewBox="0 0 34 22"><rect x="2" y="2" width="26" height="18" rx="4" fill="none" stroke="#fff" stroke-width="2.200"/><rect x="5" y="5" width="14" height="12" rx="1.500" fill="#fff"/><path d="M30 8q3 0 3 3t-3 3z" fill="#fff"/></svg>
    <span class="clock">16:41<br><span>19-08-2025</span></span>
  </div>
</footer>
</body>
</html>
```
FILE: styles.css
```css
* { box-sizing: border-box; }
body { margin: 0; width: 2560px; height: 1600px; overflow: hidden; background: #fff; display: flex; flex-direction: column; }
svg { display: block; flex: none; }
.defs { position: absolute; }
i, em { font-style: normal; }
.slot { display: flex; align-items: center; justify-content: center; flex: none; height: 100%; }

/* VirtualBox window chrome */
.titlebar { height: 45px; flex: none; display: flex; align-items: center; background: linear-gradient(90deg, #f3f1f2, #f3f3ef 35%, #f7f2ec 70%); font: 23px/45px "Open Sans", sans-serif; color: #000; }
.vm-icon { position: relative; width: 33px; margin-left: 2px; height: 32px; }
.vm-icon span { position: absolute; left: 0; top: 0; width: 13px; background: #fff; color: #222; font: 700 8px/10px "Open Sans", sans-serif; text-align: center; }
.vm-title { margin: 2px 0 0 10px; white-space: nowrap; }
.winctl { margin-left: auto; display: flex; gap: 70px; padding: 0 38px 3px 0; }
.menubar { height: 40px; flex: none; background: #fff; display: flex; gap: 33px; padding-left: 16px; font: 20.500px/40px "Open Sans", sans-serif; color: #000; }

/* Kali top panel */
.panel { height: 34px; flex: none; display: flex; align-items: center; position: relative; background: linear-gradient(90deg, #262b35, #20222e 45%, #1f202c); border-bottom: 1px solid #15161c; font: 15px/34px "Noto Sans", sans-serif; color: #d6d8de; }
.panel > * { position: relative; }
.panel .panel-art { position: absolute; left: 0; top: 0; }
.kali-logo { width: 25px; height: 25px; margin-right: 4px; background: linear-gradient(#3d8bff, #1766f0); border-radius: 3px; color: #fff; box-shadow: 0 0 5px #2a78ff; }
.vsep { width: 2px; height: 25px; background: #7b7d86; flex: none; }
.gapl { margin: 0 3px 0 5px; }
.w37 { width: 37px; } .w35 { width: 38px; } .w34 { width: 34px; } .w32 { width: 32px; } .w29 { width: 29px; } .w17 { width: 16px; }
.ws { width: 32px; height: 34px; text-align: center; }
.ws + .vsep { margin: 0 4px 0 2px; }
.on { background: #1b1c28; border-bottom: 2px solid #2a74ff; }
.tray { margin-left: auto; display: flex; align-items: center; height: 34px; }
.t1 { width: 33px; } .t2 { width: 34.500px; } .t3 { width: 41px; } .t4 { width: 33px; }
.vclock { margin: 0 10px 0 1px; width: 32px; font-size: 13.500px; white-space: nowrap; letter-spacing: -.6px; }

/* Browser tab strip */
.tabbar { height: 45px; flex: none; display: flex; align-items: center; background: #1a1b20; border-bottom: 1px solid #0c0c10; font: 14.200px/36px "Noto Sans", sans-serif; color: #fbfbfe; }
.fxslot { width: 43px; padding-right: 3px; border-right: 1px solid #45464d; margin-right: 4px; }
.tab { width: 221px; height: 36px; margin: 1px 4px 0 0; padding-left: 8px; display: flex; align-items: center; border-radius: 5px; }
.tab.active { background: #42444d; }
.tab span { width: 170px; margin: 0 0 0 6px; padding-top: 1px; white-space: nowrap; letter-spacing: -.1px; mask-image: linear-gradient(90deg, #000 84%, transparent 99%); }
.tab .tight { letter-spacing: -.4px; }
.tab.active span { mask-image: none; letter-spacing: 0; }
.fav { width: 16px; height: 16px; display: flex; align-items: center; justify-content: center; }
.fav.hk { background: #fff; color: #333; }
.newtab { margin-left: 11px; }
.tabctl { margin-left: auto; display: flex; align-items: center; padding-right: 11px; }
.tabctl > svg { margin-right: 52px; }
.wb { width: 18px; height: 18px; margin-left: 6px; border-radius: 50%; background: #383b48; border: 1px solid #09090d; display: flex; align-items: center; justify-content: center; }
.wb.blue { background: #2a74ff; border-color: #2a74ff; }

/* Address bar */
.navbar { height: 41px; flex: none; display: flex; align-items: center; background: #42444d; padding-left: 6px; font: 14.400px/30px "Noto Sans", sans-serif; }
.n { width: 36px; }
.dim { opacity: .4; }
.urlbar { width: 2063px; height: 32px; margin-left: 117px; padding-left: 8px; display: flex; align-items: center; background: #272833; border: 1px solid #0c0c12; border-radius: 4px; color: #9d9ea7; }
.lk { margin: 0 10px 0 12px; }
.url b { font-weight: 400; color: #fbfbfe; }
.zoomlvl { margin-left: auto; width: 45px; background: #4a4c57; color: #fbfbfe; border-radius: 3px; font-size: 12.300px; line-height: 22px; text-align: center; }
.star { margin: 0 7px 0 11px; }
.navright { margin-left: auto; display: flex; height: 100%; padding-right: 6px; }
.nr { width: 36px; }
.bookmarks { height: 31px; flex: none; display: flex; align-items: center; gap: 12.600px; background: #42444d; border-bottom: 1px solid #0c0c10; padding: 0 0 0 12px; font: 14px/30px "Noto Sans", sans-serif; color: #fbfbfe; }
.bookmarks span { display: flex; align-items: center; gap: 3.500px; white-space: nowrap; }
.bookmarks .wide { gap: 4.500px; }
.dk { color: #0d0d10; }

/* Gophish application */
.gp-header { height: 64px; flex: none; display: flex; align-items: center; background: #283f50; font-family: "Noto Sans CJK SC", sans-serif; color: #fff; }
.brand-hook { margin: -5px 0 0 17px; color: #dfe3e6; }
.brand { margin: -3px 0 0 6px; font-size: 25.600px; font-weight: 700; line-height: 40px; }
.usergroup { margin-left: auto; margin-right: 11px; display: flex; height: 49px; background: #1abc9c; border-radius: 5px; font-size: 15.800px; line-height: 46px; }
.user { width: 102px; display: flex; align-items: center; gap: 4px; padding: 0 0 1px 18px; border-right: 2px solid #18a98c; }
.logout { width: 46px; display: flex; align-items: center; justify-content: center; }
.gp-body { height: 1163px; flex: none; display: flex; font: 17.100px/24px "Noto Sans CJK SC", sans-serif; color: #283f50; }
.sidebar { width: 427px; height: 100%; padding-top: 20px; background: #f5f5f5; border-right: 1px solid #eee; color: #333; }
.sidebar a { display: flex; justify-content: space-between; align-items: center; height: 57.150px; padding: 0 23px 0 24px; }
.sidebar em { width: 58px; height: 21px; background: #777; color: #fff; border-radius: 10.500px; font: 700 12.800px/21px "Noto Sans CJK SC", sans-serif; text-align: center; margin-top: 1px; }
.sidebar hr { height: 1px; border: 0; background: #e9e9e9; margin: 24px 0 24px; }
main { width: 2073px; margin-left: 30px; }
h1, h2 { margin: 0; font-family: Roboto, sans-serif; font-weight: 700; color: #283f50; }
h1 { height: 118px; padding-top: 20px; font-size: 73.300px; line-height: 80px; border-bottom: 1px solid #e6e6e6; }
.buttons { display: flex; gap: 4px; margin-top: 36px; }
.b { height: 50px; padding: 0 0 2px; border: 0; border-radius: 5px; color: #fff; font: 16px/48px "Noto Sans CJK SC", sans-serif; display: flex; align-items: center; justify-content: center; gap: 3px; white-space: nowrap; }
.b svg { margin-top: 1px; }
.back { width: 97px; background: #bdc3c7; color: #eef0f1; }
.export { width: 151px; background: #1abc9c; margin-left: -1px; }
.complete, .refresh { width: 130px; background: #428bca; }
.refresh { width: 117px; }
.delete { width: 106px; background: #e74c3c; }
.caret { border: 6px solid transparent; border-top: 6.500px solid #fff; border-bottom: 0; }
.timeline text { text-anchor: middle; }
.ctitle { font-size: 17.100px; fill: #333; }
.ticks { font: 13.100px "Liberation Sans", sans-serif; fill: #666; }
.donuts { display: flex; height: 262px; padding-left: 173px; }
figure { margin: 0; width: 345.500px; display: flex; flex-direction: column; align-items: center; color: #333; }
figcaption { height: 65px; line-height: 38px; }
figure circle { fill: none; stroke: currentColor; stroke-width: 13.200; }
figure path { stroke: #fff; stroke-width: 1.600; }
figure text { font: 700 27.500px "Noto Sans CJK SC", sans-serif; text-anchor: middle; fill: currentColor; }
.teal svg { color: #1abc9c; } .yellow svg { color: #f9bf3b; } .orange svg { color: #f39c12; } .red svg { color: #f05b4f; } .gray svg { color: #ddd; }
.gray text { fill: #45d6ef; }
h2 { height: 101px; padding-top: 10px; font-size: 63.400px; line-height: 71px; }
.tools { height: 42px; display: flex; justify-content: space-between; font-size: 16.100px; line-height: 38px; }
.tools label { display: flex; gap: 3.500px; }
.select, .input { width: 90px; height: 42px; border: 1.500px solid #bdc3c7; border-radius: 7px; padding: 6px 0 0 12px; font-size: 14.500px; background: #fff; }
.input { width: 197px; margin-left: 4.500px; }
table { width: 2073px; table-layout: fixed; border-collapse: collapse; margin-top: 13px; }
.c0 { width: 60px; } .c1 { width: 389px; } .c2 { width: 381px; } .c3 { width: 276px; } .c4 { width: 331px; } .c5 { width: 400px; }
th, td { padding: 0; text-align: left; }
th { height: 49px; border-bottom: 2px solid #ddd; }
th div { display: flex; }
.s { margin: -7px 0 0 7px; }
td { height: 45px; }
.expand { display: block; margin-left: 9px; width: 0; border: 6.500px solid transparent; border-left: 7px solid #283f50; border-right: 0; }
.label { display: block; width: 118px; height: 25px; margin-top: 5px; background: #d9534f; border-radius: 4px; color: #fff; font: 700 13px/22px "Noto Sans CJK SC", sans-serif; text-align: center; }
.rep svg { margin-left: 50px; }
.footer { display: flex; justify-content: space-between; margin-top: 11px; font-size: 16.100px; line-height: 45px; }
.pages { display: flex; height: 45px; border: 1.500px solid #ddd; border-radius: 5px; font-size: 17.100px; line-height: 41px; color: #777; text-align: center; }
.p1 { width: 99px; } .p3 { width: 65px; }
.cur { width: 40px; }
.pages .cur { background: #337ab7; color: #fff; margin: -1px 0; line-height: 43px; }

/* VirtualBox status bar */
.vbstatus { height: 41px; flex: none; display: flex; align-items: center; justify-content: flex-end; gap: 6.100px; background: #efefef; padding-right: 1px; font: 20.800px/41px "Open Sans", sans-serif; color: #000; }
.vbstatus svg { margin-top: 1px; }
.vbstatus span { width: 92px; padding-top: 1px; white-space: nowrap; }

/* Windows taskbar */
.taskbar { height: 96px; flex: none; display: flex; align-items: center; border-top: 2px solid #45423f; background: linear-gradient(90deg, #2e2318, #29241a 5%, #2c2116 12%, #2d2217 24%, #272718 30%, #292718 34%, #26212a 37%, #2b2220 44%, #2e211c 49%, #2a2425 60%, #1e2627 68%, #202020 78%, #202036 86%, #211e30 92%, #33211a 97%, #342413); color: #fff; font-family: "Open Sans", sans-serif; }
.widget { position: relative; width: 48px; height: 46px; margin: 0 391px 0 41px; top: -6px; }
.widget b { position: absolute; left: 21px; top: -8px; width: 32px; height: 32px; border-radius: 50%; background: #c42b1c; font: 20px/32px "Open Sans", sans-serif; text-align: center; }
.apps { display: flex; margin-left: 1px; }
.apps > div { width: 88px; height: 80px; display: flex; align-items: center; justify-content: center; position: relative; }
.apps .run::after { content: ""; position: absolute; bottom: 2px; left: 38px; width: 12px; height: 6px; border-radius: 3px; background: #9b9b9b; }
.apps .cur::after { background: #4cc2ff; width: 30px; left: 29px; }
.apps .cur::before { content: ""; position: absolute; inset: 0 4px; border-radius: 8px; background: rgba(255,255,255,.08); border: 1px solid rgba(255,255,255,.08); }
.avatar { position: absolute; left: 46px; top: 6px; width: 32px; height: 32px; border-radius: 50%; background: linear-gradient(90deg, #5c574e 30%, #2a211b 42%, #8d8578 55%, #4f4a42 70%); }
.wa b { position: absolute; left: 35px; top: 6px; width: 54px; height: 32px; border-radius: 12px; background: #4cc2ff; color: #111; font: 21px/32px "Open Sans", sans-serif; text-align: center; }
.linkedin { width: 42px; height: 42px; border-radius: 3px; background: #0a66c2; font: 700 34px/42px "Open Sans", sans-serif; text-align: center; letter-spacing: -1px; }
.word { width: 47px; height: 42px; padding: 9px 0 0; background: linear-gradient(#41a5ee 25%, #2b7cd3 25% 50%, #185abd 50% 75%, #103f91 75%); background-size: 36px; background-position: right; background-repeat: no-repeat; border-radius: 2px; }
.word span { display: block; width: 24px; height: 24px; background: #185abd; border-radius: 2px; font: 700 17px/24px "Open Sans", sans-serif; text-align: center; }
.vm64 { position: relative; width: 48px; height: 48px; }
.vm64 span { position: absolute; left: 1px; top: 0; width: 19px; height: 15px; background: #fff; border-radius: 2px; color: #222; font: 700 12px/15px "Open Sans", sans-serif; text-align: center; }
.systray { margin-left: auto; display: flex; align-items: center; padding-right: 38px; font-size: 22.300px; line-height: 32px; }
.cloud { margin-left: 37px; }
.lang { width: 48px; margin: 0 0 0 36px; text-align: center; }
.wifi { margin-left: 35px; }
.spk { margin-left: 15px; }
.bat { margin-left: 13px; }
.clock { margin: -2px 0 0 31px; width: 125px; text-align: right; white-space: nowrap; }
.clock span { font-size: 23.800px; }
```
